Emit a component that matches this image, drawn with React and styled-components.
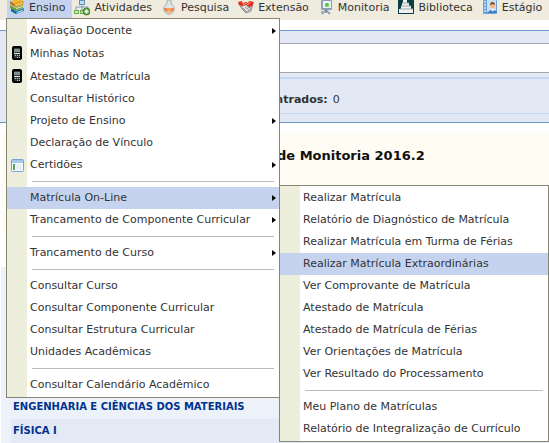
import React from "react";
import styled, { createGlobalStyle } from "styled-components";

const GlobalStyle = createGlobalStyle`
  *, *::before, *::after { box-sizing: border-box; }
  body {
    margin: 0;
    background: #fff;
    color: #333;
    font-family: Verdana, "DejaVu Sans", sans-serif;
    font-size: 11px;
    line-height: 14px;
  }
`;

const Page = styled.div`
  position: relative;
  min-height: 100vh;
  display: flex;
  flex-direction: column;
  overflow: hidden;
`;

const MenuBar = styled.nav`
  display: flex;
  height: 20px;
  padding-left: 7px;
  background: #efebde;
`;

const BarButton = styled.button`
  display: flex;
  align-items: flex-start;
  gap: 4px;
  flex: none;
  height: 18px;
  padding: 0 7px 0 2px;
  border: 0;
  background: ${(p) => (p.$active ? "#c6d3ef" : "transparent")};
  color: #333;
  font: inherit;
  line-height: 16px;
  white-space: nowrap;

  svg { flex: none; }
`;

const SearchPanel = styled.section`
  margin-top: 10px;
  padding-top: 12px;
  height: 93px;
  border-top: 1px solid #6699cc;
  border-bottom: 1px solid #6699cc;
  background: #e2e8f4;
`;

const SearchField = styled.div`
  height: 30px;
  margin-left: 12px;
  border-top: 1px solid #a5a5a5;
  border-bottom: 1px solid #a5a5a5;
  background: #fff;
`;

const Summary = styled.p`
  display: flex;
  align-items: center;
  gap: 5px;
  height: 37px;
  margin: 4px 0 0 12px;
  padding: 7px 0 0 234px;
  border-top: 2px solid #c4d5f5;
  border-bottom: 1px solid #c4d5f5;
`;

const Notice = styled.header`
  height: 100px;
  margin: 10px 0 0 1px;
  padding: 15px 0 0 276px;
  background: #fffcf4;
`;

const NoticeTitle = styled.h1`
  margin: 0;
  color: #111;
  font-size: 13px;
  line-height: 16px;
  white-space: nowrap;
`;

const Courses = styled.ul`
  flex: 1;
  display: flex;
  flex-direction: column;
  margin: 34px 0 0 1px;
  padding: 128px 0 0 10px;
  background: #edf2fa;
  list-style: none;
`;

const Course = styled.li`
  height: 24px;
  padding: 5px 2px;
  background: ${(p) => (p.$shaded ? "#e3e9f5" : "transparent")};
`;

const CourseLink = styled.a`
  color: #003390;
  font-weight: bold;
  font-size: 10px;
  text-decoration: none;
`;

const Menu = styled.ul`
  position: absolute;
  left: ${(p) => p.$left}px;
  top: ${(p) => p.$top}px;
  width: ${(p) => p.$width}px;
  margin: 0;
  padding: 1px 0;
  border: 1px solid #868576;
  background: linear-gradient(to right, #eeeedd 20px, #fff 20px);
  list-style: none;
`;

const MenuRow = styled.li`
  display: flex;
`;

const MenuButton = styled.button`
  flex: 1;
  display: grid;
  grid-template-columns: 20px 1fr 7px;
  align-items: center;
  min-height: 22px;
  padding: 4px 0;
  border: 0;
  background: ${(p) => (p.$active ? "#c6d3ef" : "transparent")};
  color: #333;
  font: inherit;
  text-align: left;
  white-space: nowrap;
`;

const IconSlot = styled.span`
  display: flex;
  justify-content: center;
  align-items: center;

  svg { display: block; }
`;

const Label = styled.span`
  padding-left: 3px;
`;

const Separator = styled.li`
  height: 1px;
  margin: 5px 5px 5px 25px;
  background: #bcbcb4;
`;

const BooksIcon = () => (
  <svg width="16" height="16" viewBox="0 0 16 16" aria-hidden="true">
    <path d="M2 1l7-2 5 2-8 3z" fill="#f1b82d" />
    <path d="M1 1l5 3v3L1 4z" fill="#b17a18" />
    <path d="M6 4l8-3v3L6 7z" fill="#f0c552" stroke="#d99518" strokeWidth="1" />
    <path d="M1 5l5 3 8-3v3l-8 3-5-3z" fill="#6f9d2d" />
    <path d="M7 8l7-2v1L7 9z" fill="#e5efc6" />
    <path d="M2 8l5 3 8-3v3l-8 3-5-3z" fill="#2787b7" />
    <path d="M8 12l6-2v1l-6 2z" fill="#c6eaf5" />
    <path d="M2 9l5 3v2l-5-3z" fill="#176583" />
  </svg>
);

const HierarchyIcon = () => (
  <svg width="16" height="16" viewBox="0 0 16 16" aria-hidden="true">
    <path d="M8 4v6M2 10V7h12v3" fill="none" stroke="#7d9db4" />
    <rect x="5.500" y="0.500" width="5" height="4" fill="#bcdcf3" stroke="#638fb3" />
    <rect x="0.500" y="10.500" width="4" height="3" fill="#c4edab" stroke="#70a853" />
    <rect x="6.500" y="10.500" width="3" height="3" fill="#c4edab" stroke="#70a853" />
    <circle cx="12.500" cy="11.500" r="3.500" fill="#63a947" stroke="#3c7f28" />
    <path d="M10.500 11.500h4M12.500 9.500v4" stroke="#fff" strokeWidth="1.500" />
  </svg>
);

const FlaskIcon = () => (
  <svg width="16" height="16" viewBox="0 0 16 16" aria-hidden="true">
    <path d="M6 0v4a5.300 5.300 0 1 0 4 0V0z" fill="#e0e5e8" stroke="#a4aeb3" />
    <path d="M3.300 8h9.400a4.700 4.700 0 1 1-9.400 0z" fill="#ee6a26" />
    <path d="M4.500 8h7l-1 2h-5z" fill="#ffa066" />
    <ellipse cx="8" cy="11.500" rx="2.500" ry="1.500" fill="#ffb870" />
  </svg>
);

const HandshakeIcon = () => (
  <svg width="16" height="16" viewBox="0 0 16 16" aria-hidden="true">
    <path d="M1 4l3 5 4 4 5-2 2-7-4 2z" fill="#b4b4b2" stroke="#777" strokeWidth="0.700" />
    <path d="M0 2l4-1 1 2 3-1 2 1 1-2 5 1-2 4-3 1-3-2-4 1-3-1z" fill="#e32c1a" />
    <path d="M4 2l2 3 2-2 2 2 2-3" stroke="#ff9c84" fill="none" />
    <path d="M4 7l4-2 4 4-3 3z" fill="#e6e6e4" />
    <path d="M5 8l4 4M7 7l4 3M9 6l3 2" stroke="#8c8c8b" />
  </svg>
);

const BoardIcon = () => (
  <svg width="16" height="16" viewBox="0 0 16 16" aria-hidden="true">
    <path d="M8 10l-4 4M8 10l4 4M8 9v4" stroke="#7d8ba0" strokeWidth="1.500" />
    <rect x="3" y="0" width="11" height="10" rx="1" fill="#8d9db5" />
    <rect x="5" y="1" width="8" height="7" fill="#e7f3f8" />
    <circle cx="9" cy="5" r="2" fill="#4bbf37" />
    <circle cx="10" cy="6" r="1" fill="#b5cf32" />
    <path d="M3 11h4v2H3z" fill="#a2adbd" />
  </svg>
);

const LibraryIcon = () => (
  <svg width="16" height="16" viewBox="0 0 16 16" aria-hidden="true">
    <rect width="16" height="14" fill="#093f43" />
    <path d="M5 0h4v3h2v3h2v3h2v4H1V9h2V6h1V3h1z" fill="#eef1ef" />
    <path d="M4 3h7M3 6h10M2 9h13" stroke="#9fb0ae" />
  </svg>
);

const InternshipIcon = () => (
  <svg width="16" height="16" viewBox="0 0 16 16" aria-hidden="true">
    <rect x="1" width="14" height="14" rx="1" fill="#6ca0db" />
    <rect x="5" width="9" height="12" fill="#c7e0f8" />
    <path d="M2 2h2M2 5h2M2 8h2M2 11h2" stroke="#fff" />
    <path d="M6 13c0-4 9-4 9 0z" fill="#397fc5" />
    <circle cx="10.500" cy="6" r="2.500" fill="#efba87" />
    <path d="M8 5c0-4 5-4 5 0l-2-1z" fill="#7c4626" />
    <path d="M9 9l2 3 1-3z" fill="#fff" />
  </svg>
);

const CalculatorIcon = () => (
  <svg width="10" height="15" viewBox="0 0 10 15" aria-hidden="true">
    <rect x="1" y="1" width="8" height="12" rx="1" fill="#343a39" stroke="#000" strokeWidth="2" />
    <rect x="2" y="3" width="6" height="3" fill="#7f928b" />
    <path d="M2 7.500h6" stroke="#e4e4e4" />
    <path d="M3 9.500h1M5 9.500h1M7 9.500h1M5 11.500h1M7 11.500h1" stroke="#c8c8c8" />
  </svg>
);

const WindowIcon = () => (
  <svg width="13" height="13" viewBox="0 0 13 13" aria-hidden="true">
    <rect x="0.500" y="0.500" width="12" height="12" rx="1" fill="#f8fbff" stroke="#78a3d3" />
    <path d="M1 2.500h11" stroke="#a8c8eb" strokeWidth="3" />
    <rect x="2" y="5" width="2" height="6" fill="#55a55b" />
    <path d="M5 5h6v6H5z" fill="#e6eef7" />
  </svg>
);

const Arrow = () => (
  <svg width="4" height="8" viewBox="0 0 4 8" aria-hidden="true">
    <path d="M0 1l4 3-4 3z" fill="#000" />
  </svg>
);

const barItems = [
  { label: "Ensino", Icon: BooksIcon, active: true },
  { label: "Atividades", Icon: HierarchyIcon },
  { label: "Pesquisa", Icon: FlaskIcon },
  { label: "Extensão", Icon: HandshakeIcon },
  { label: "Monitoria", Icon: BoardIcon },
  { label: "Biblioteca", Icon: LibraryIcon },
  { label: "Estágio", Icon: InternshipIcon },
];

const teachingItems = [
  { label: "Avaliação Docente", nested: true },
  { label: "Minhas Notas", Icon: CalculatorIcon },
  { label: "Atestado de Matrícula", Icon: CalculatorIcon },
  { label: "Consultar Histórico" },
  { label: "Projeto de Ensino", nested: true },
  { label: "Declaração de Vínculo" },
  { label: "Certidões", Icon: WindowIcon, nested: true },
  null,
  { label: "Matrícula On-Line", nested: true, active: true },
  { label: "Trancamento de Componente Curricular", nested: true },
  null,
  { label: "Trancamento de Curso", nested: true },
  null,
  { label: "Consultar Curso" },
  { label: "Consultar Componente Curricular" },
  { label: "Consultar Estrutura Curricular" },
  { label: "Unidades Acadêmicas" },
  null,
  { label: "Consultar Calendário Acadêmico" },
];

const enrollmentItems = [
  { label: "Realizar Matrícula" },
  { label: "Relatório de Diagnóstico de Matrícula" },
  { label: "Realizar Matrícula em Turma de Férias" },
  { label: "Realizar Matrícula Extraordinárias", active: true },
  { label: "Ver Comprovante de Matrícula" },
  { label: "Atestado de Matrícula" },
  { label: "Atestado de Matrícula de Férias" },
  { label: "Ver Orientações de Matrícula" },
  { label: "Ver Resultado do Processamento" },
  null,
  { label: "Meu Plano de Matrículas" },
  { label: "Relatório de Integralização de Currículo" },
];

function DropMenu({ items, left, top, width }) {
  return (
    <Menu $left={left} $top={top} $width={width}>
      {items.map((item, i) =>
        item ? (
          <MenuRow key={item.label}>
            <MenuButton type="button" $active={item.active}>
              <IconSlot>{item.Icon && <item.Icon />}</IconSlot>
              <Label>{item.label}</Label>
              {item.nested && <Arrow />}
            </MenuButton>
          </MenuRow>
        ) : (
          <Separator key={i} role="separator" />
        )
      )}
    </Menu>
  );
}

export default function App() {
  return (
    <Page>
      <GlobalStyle />
      <MenuBar>
        {barItems.map(({ label, Icon, active }) => (
          <BarButton key={label} type="button" $active={active}>
            <Icon />
            {label}
          </BarButton>
        ))}
      </MenuBar>
      <SearchPanel>
        <SearchField />
        <Summary>
          <strong>encontrados:</strong>
          <span>0</span>
        </Summary>
      </SearchPanel>
      <Notice>
        <NoticeTitle>de Monitoria 2016.2</NoticeTitle>
      </Notice>
      <Courses>
        <Course>
          <CourseLink href="#materiais">ENGENHARIA E CIÊNCIAS DOS MATERIAIS</CourseLink>
        </Course>
        <Course $shaded>
          <CourseLink href="#fisica">FÍSICA I</CourseLink>
        </Course>
      </Courses>
      <DropMenu items={teachingItems} left={6} top={18} width={274} />
      <DropMenu items={enrollmentItems} left={279} top={185} width={270} />
    </Page>
  );
}
